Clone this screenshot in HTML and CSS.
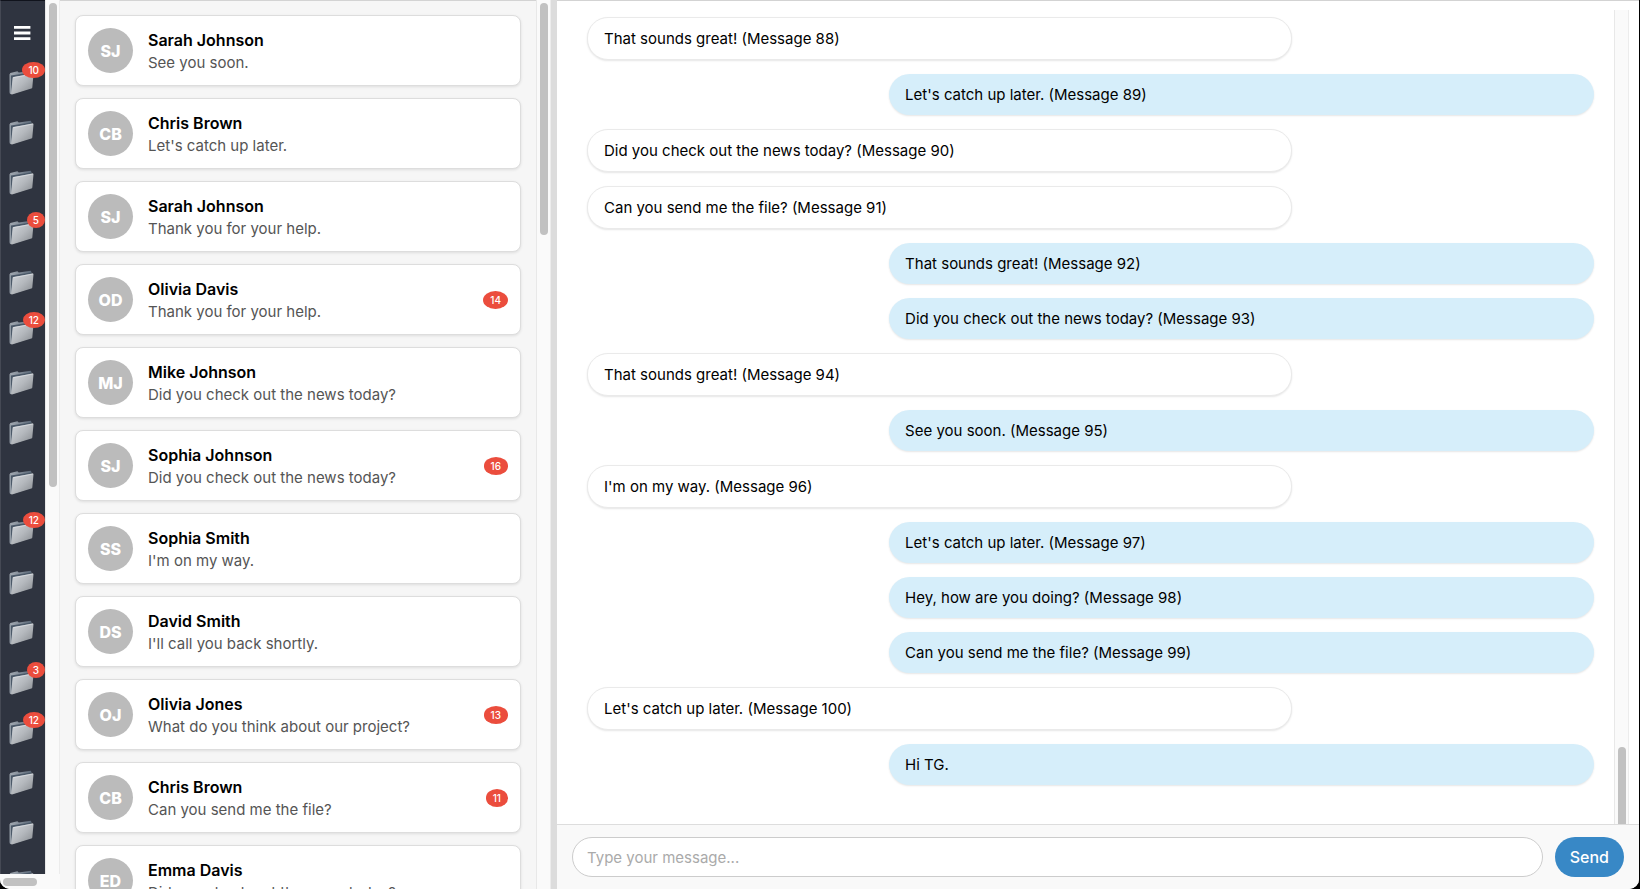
FILE: index.html
```html
<!DOCTYPE html>
<html lang="en">
<head>
<meta charset="utf-8">
<title>Messenger</title>
<link rel="stylesheet" href="styles.css">
</head>
<body>
<div class="window">
  <div class="rail-wrap">
    <nav class="rail" id="rail" aria-label="Folders">
      <button class="menu" type="button" aria-label="Menu"><svg width="17" height="14" viewBox="0 0 17 14" fill="#fff"><path d="M0 0h16.4v2.8H0zM0 5.6h16.4v2.8H0zM0 11.2h16.4v2.8H0z"/></svg></button>
    </nav>
    <div class="track"><div class="thumb thumb-rail"></div></div>
    <div class="track-x"><div class="thumb-x"></div></div>
  </div>
  <section class="list-wrap">
    <div class="list" id="list"></div>
    <div class="track"><div class="thumb thumb-list"></div></div>
  </section>
  <div class="divider"></div>
  <main class="chat">
    <div class="history">
      <div class="messages" id="messages"></div>
      <div class="track track-chat"><div class="thumb thumb-chat"></div></div>
    </div>
    <form class="composer">
      <input class="field" type="text" placeholder="Type your message..." aria-label="Message">
      <button class="send" type="button">Send</button>
    </form>
  </main>
</div>
<svg width="0" height="0" class="defs" aria-hidden="true">
  <defs>
    <linearGradient id="front" x1="0" y1="0" x2="1" y2="1"><stop offset="0" stop-color="#d3d7dc"/><stop offset="0.5" stop-color="#b4b8bd"/><stop offset="1" stop-color="#85898e"/></linearGradient>
    <linearGradient id="back" x1="0" y1="0" x2="1" y2="0"><stop offset="0" stop-color="#a4abb3"/><stop offset="1" stop-color="#5b6878"/></linearGradient>
    <symbol id="folder" viewBox="0 0 26 26">
      <path d="M.7 4.2 1.4 2.9 8.4 1.3 9.8 2.4 21.8.8 22.6 2.4 22 18 2 24.3.8 23.5z" fill="url(#back)"/>
      <path d="M1.8 5.4 22 2.6 21.5 6 4 9 2.3 23.4z" fill="#4a5868"/>
      <path d="M1.2 4.2v18.5" stroke="#8e98a3" stroke-width="1"/>
      <path d="M3.6 8.1Q3.7 7.3 4.6 7.1L23.6 3.5Q24.6 3.4 24.5 4.3L23.3 17.4Q23.2 18.3 22.3 18.6L3 24.4Q2 24.6 2.1 23.6z" fill="url(#front)"/>
      <path d="M4.2 7.7 24 4" stroke="#dfe3e7" stroke-width=".7"/>
    </symbol>
  </defs>
</svg>
<script src="app.js"></script>
</body>
</html>
```
FILE: styles.css
```css
* { box-sizing: border-box; }

body {
  margin: 0;
  background: #000;
  font-family: Inter, "Liberation Sans", sans-serif;
  font-size: 15px;
  color: #000;
}

button, input { font: inherit; }

.window {
  display: flex;
  height: 100vh;
  margin-right: 1px;
  overflow: hidden;
  border-radius: 0 0 10px 10px;
  background: #fff;
  box-shadow: inset 0 1px #d3d3d3;
}

.defs { position: absolute; }

/* scroll tracks */
.track {
  width: 15px;
  padding: 3px 2px 0 3px;
  background: #fafafa;
  border-left: 1px solid #e8e8e8;
  border-right: 1px solid #ececec;
}
.thumb { width: 8px; border-radius: 4px; background: #c1c1c1; }
.thumb-rail { height: 484px; }
.thumb-list { height: 232px; }
.track-x { grid-column: 1 / 3; height: 15px; padding: 4px 3px; background: #fafafa; }
.thumb-x { width: 34px; height: 8px; border-radius: 4px; background: #c1c1c1; }

/* folder rail */
.rail-wrap {
  display: grid;
  grid-template: minmax(0, 1fr) auto / 45px 15px;
  flex: none;
}
.rail {
  display: flex;
  flex-direction: column;
  align-items: flex-start;
  gap: 22px;
  padding-top: 25px;
  overflow: hidden;
  background: #2f3440;
  border-top: 1px solid #10131c;
  border-left: 1px solid #454954;
}
.menu, .folder { flex: none; padding: 0; border: 0; background: none; }
.menu { height: 14px; margin: 0 0 6px 13px; }
.menu svg, .folder svg { display: block; }
.folder { position: relative; width: 44px; height: 28px; padding: 2px 0 0 8px; }
.folder svg { width: 26px; height: 26px; }
.rail-badge {
  position: absolute;
  top: -6px;
  right: 0;
  padding: 2px 6px;
  border-radius: 50%;
  background: #eb4d3d;
  color: #fff;
  font-size: 10px;
  font-weight: 500;
  line-height: 12px;
}

/* conversation list */
.list-wrap { display: flex; flex: 0 0 491px; }
.list {
  flex: 1;
  display: flex;
  flex-direction: column;
  gap: 12px;
  padding: 14px 15px 0;
  overflow: hidden;
  background: #f6f6f6;
  border-top: 1px solid #d3d3d3;
}
.card {
  flex: none;
  display: flex;
  align-items: center;
  gap: 15px;
  padding: 12px;
  height: 71px;
  border: 1px solid #ddd;
  border-radius: 8px;
  background: #fff;
  box-shadow: 0 1px 3px rgba(0, 0, 0, .1);
}
.avatar {
  flex: none;
  width: 45px;
  height: 45px;
  border-radius: 50%;
  background: #bbb;
  color: #fff;
  font-size: 16px;
  font-weight: 800;
  line-height: 46px;
  text-align: center;
}
.about { flex: 1; min-width: 0; padding-top: 2px; }
.name { font-size: 16px; font-weight: 600; line-height: 22px; }
.preview { color: #555; line-height: 23px; }
.count {
  padding: 3px 7px;
  border-radius: 50%;
  background: #eb4d3d;
  color: #fff;
  font-size: 10px;
  font-weight: 500;
  line-height: 12px;
}

.divider { flex: none; width: 6px; background: #dcdcdc; }

/* conversation */
.chat { flex: 1; min-width: 0; display: flex; flex-direction: column; }
.history { flex: 1; min-height: 0; display: flex; padding: 10px 10px 0 0; }
.messages {
  flex: 1;
  display: flex;
  flex-direction: column;
  gap: 14px;
  padding: 7px 20px 0 30px;
  overflow: hidden;
}
.bubble {
  flex: none;
  width: 70%;
  padding: 11px 16px;
  border-radius: 21px;
  line-height: 19px;
  box-shadow: 0 1px 2px rgba(0, 0, 0, .1);
}
.received { border: 1px solid #eaeaea; background: #fff; }
.sent { align-self: flex-end; background: #d6eefa; }
.track-chat { display: flex; align-items: flex-end; padding-top: 0; }
.thumb-chat { height: 77px; border-radius: 4px 4px 0 0; }

.composer {
  display: flex;
  gap: 12px;
  padding: 12px 15px;
  border-top: 1px solid #ddd;
  background: #f9f9f9;
}
.field {
  flex: 1;
  min-width: 0;
  height: 40px;
  padding: 0 14px;
  border: 1px solid #ccc;
  border-radius: 20px;
  background: #fff;
}
.field::placeholder { color: #aaa; }
.send {
  height: 40px;
  padding: 0 15px;
  border: 0;
  border-radius: 20px;
  background: #3888c6;
  color: #fff;
  font-size: 16px;
  font-weight: 500;
}
```
FILE: app.js
```js
const folders = [10, 0, 0, 5, 0, 12, 0, 0, 0, 12, 0, 0, 3, 12, 0, 0, 0];

const conversations = [
  ["Sarah Johnson", "See you soon."],
  ["Chris Brown", "Let's catch up later."],
  ["Sarah Johnson", "Thank you for your help."],
  ["Olivia Davis", "Thank you for your help.", 14],
  ["Mike Johnson", "Did you check out the news today?"],
  ["Sophia Johnson", "Did you check out the news today?", 16],
  ["Sophia Smith", "I'm on my way."],
  ["David Smith", "I'll call you back shortly."],
  ["Olivia Jones", "What do you think about our project?", 13],
  ["Chris Brown", "Can you send me the file?", 11],
  ["Emma Davis", "Did you check out the news today?"]
];

const messages = [
  ["received", "That sounds great! (Message 88)"],
  ["sent", "Let's catch up later. (Message 89)"],
  ["received", "Did you check out the news today? (Message 90)"],
  ["received", "Can you send me the file? (Message 91)"],
  ["sent", "That sounds great! (Message 92)"],
  ["sent", "Did you check out the news today? (Message 93)"],
  ["received", "That sounds great! (Message 94)"],
  ["sent", "See you soon. (Message 95)"],
  ["received", "I'm on my way. (Message 96)"],
  ["sent", "Let's catch up later. (Message 97)"],
  ["sent", "Hey, how are you doing? (Message 98)"],
  ["sent", "Can you send me the file? (Message 99)"],
  ["received", "Let's catch up later. (Message 100)"],
  ["sent", "Hi TG."]
];

const initials = name => name.split(" ").map(word => word[0]).join("");

document.getElementById("rail").insertAdjacentHTML("beforeend", folders.map(count => `
  <button class="folder" type="button" aria-label="Folder">
    <svg><use href="#folder"/></svg>
    ${count ? `<span class="rail-badge">${count}</span>` : ""}
  </button>`).join(""));

document.getElementById("list").innerHTML = conversations.map(([name, text, count]) => `
  <article class="card">
    <div class="avatar">${initials(name)}</div>
    <div class="about">
      <div class="name">${name}</div>
      <div class="preview">${text}</div>
    </div>
    ${count ? `<span class="count">${count}</span>` : ""}
  </article>`).join("");

document.getElementById("messages").innerHTML = messages.map(([side, text]) =>
  `<div class="bubble ${side}">${text}</div>`).join("");
```
